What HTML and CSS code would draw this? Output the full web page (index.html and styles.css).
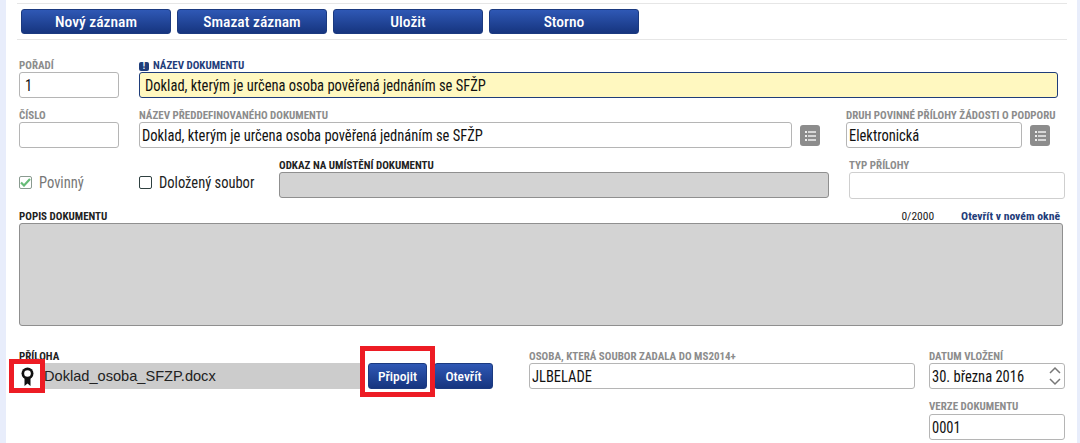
FILE: index.html
```html
<!DOCTYPE html>
<html lang="cs">
<head>
    <meta charset="UTF-8">
    <meta name="viewport" content="width=device-width, initial-scale=1.0">
    <title>Dokument</title>
    <link rel="stylesheet" href="styles.css">
</head>
<body>
    <div class="page">
        <div class="toolbar">
            <button class="btn btn-wide">Nový záznam</button>
            <button class="btn btn-wide">Smazat záznam</button>
            <button class="btn btn-wide">Uložit</button>
            <button class="btn btn-wide">Storno</button>
        </div>

        <div class="form">
            <div class="row row-first">
                <div class="field w-small">
                    <label class="lbl">POŘADÍ</label>
                    <div class="input input-pad"><span class="txt">1</span></div>
                </div>
                <div class="field w-name">
                    <label class="lbl lbl-req"><span class="req-mark">!</span>NÁZEV DOKUMENTU</label>
                    <div class="input input-req"><span class="txt">Doklad, kterým je určena osoba pověřená jednáním se SFŽP</span></div>
                </div>
            </div>

            <div class="row">
                <div class="field w-small">
                    <label class="lbl">ČÍSLO</label>
                    <div class="input"></div>
                </div>
                <div class="field w-predef">
                    <label class="lbl">NÁZEV PŘEDDEFINOVANÉHO DOKUMENTU</label>
                    <div class="input input-tight"><span class="txt">Doklad, kterým je určena osoba pověřená jednáním se SFŽP</span></div>
                </div>
                <span class="list-btn">
                    <svg width="11" height="10" viewBox="0 0 11 10"><path fill="#eee" d="M0 0h2v2H0zM3 .3h8v1.400H3zM0 4h2v2H0zM3 4.300h8v1.400H3zM0 8h2v2H0zM3 8.300h8v1.400H3z"/></svg>
                </span>
                <div class="field w-druh">
                    <label class="lbl lbl-nowrap">DRUH POVINNÉ PŘÍLOHY ŽÁDOSTI O PODPORU</label>
                    <div class="input input-tight"><span class="txt">Elektronická</span></div>
                </div>
                <span class="list-btn">
                    <svg width="11" height="10" viewBox="0 0 11 10"><path fill="#eee" d="M0 0h2v2H0zM3 .3h8v1.400H3zM0 4h2v2H0zM3 4.300h8v1.400H3zM0 8h2v2H0zM3 8.300h8v1.400H3z"/></svg>
                </span>
            </div>

            <div class="row">
                <div class="checks">
                    <span class="check check-on">
                        <span class="box box-on">
                            <svg width="11" height="9" viewBox="0 0 11 9"><path fill="none" stroke="#66bb77" stroke-width="2.200" d="M1 4.500l3 3 6-6.500"/></svg>
                        </span><span class="txt">Povinný</span>
                    </span>
                    <span class="check"><span class="box"></span><span class="txt">Doložený soubor</span></span>
                </div>
                <div class="field w-link">
                    <label class="lbl lbl-dark">ODKAZ NA UMÍSTĚNÍ DOKUMENTU</label>
                    <div class="input input-off"></div>
                </div>
                <div class="field w-typ">
                    <label class="lbl">TYP PŘÍLOHY</label>
                    <div class="input input-typ"></div>
                </div>
            </div>

            <div class="popis">
                <div class="popis-head">
                    <label class="lbl lbl-dark">POPIS DOKUMENTU</label>
                    <span class="counter">0/2000</span>
                    <a class="open-link" href="#">Otevřít v novém okně</a>
                </div>
                <div class="input input-off textarea"></div>
            </div>

            <div class="row row-attach">
                <div class="field w-file">
                    <label class="lbl lbl-dark">PŘÍLOHA</label>
                    <div class="file-name">Doklad_osoba_SFZP.docx</div>
                </div>
                <div class="attach-btns">
                    <button class="btn btn-small btn-join">Připojit</button>
                    <button class="btn btn-small">Otevřít</button>
                </div>
                <div class="field w-person">
                    <label class="lbl">OSOBA, KTERÁ SOUBOR ZADALA DO MS2014+</label>
                    <div class="input input-tight"><span class="txt">JLBELADE</span></div>
                </div>
                <div class="w-date">
                    <div class="field">
                        <label class="lbl">DATUM VLOŽENÍ</label>
                        <div class="input input-tight input-date">
                            <span class="txt">30. března 2016</span>
                            <svg class="spin" width="12" height="22" viewBox="0 0 12 22"><path fill="none" stroke="#777" stroke-width="1.500" d="M1 8l5-5 5 5M1 14l5 5 5-5"/></svg>
                        </div>
                    </div>
                    <div class="field field-verze">
                        <label class="lbl">VERZE DOKUMENTU</label>
                        <div class="input input-tight"><span class="txt">0001</span></div>
                    </div>
                </div>
            </div>
        </div>

        <!-- red annotations over the screenshot -->
        <div class="mark mark-icon">
            <svg width="13" height="19" viewBox="0 0 13 19"><path d="M3.500 9v10l3-2.500 3 2.500V9z" fill="#111"/><circle cx="6.500" cy="6.500" r="6" fill="#111"/><circle cx="6.500" cy="6.500" r="3.300" fill="#fff"/></svg>
        </div>
        <div class="mark mark-join"></div>
    </div>
</body>
</html>
```

FILE: styles.css
```css
* {
    box-sizing: border-box;
    margin: 0;
    padding: 0;
}
body {
    font-family: 'Roboto', Arial, sans-serif;
    font-stretch: 75%;
    background-color: #ffffff;
    overflow: hidden;
}
.page {
    position: relative;
    height: 443px;
    border-left: 6px solid #e8edfb;
    border-right: 3px solid #e8edfb;
    padding: 3px 10px 0 11px;
    overflow: hidden;
}
.toolbar {
    display: flex;
    gap: 6px;
    height: 37px;
    padding: 5px 0 0 4px;
    border-top: 1px solid #e6e6e6;
    border-bottom: 1px solid #e6e6e6;
}
.btn {
    height: 25px;
    border: 1px solid #1b3a80;
    border-radius: 3px;
    background: linear-gradient(#2f58b5, #16357f);
    color: #ffffff;
    font-family: inherit;
    font-stretch: inherit;
    font-size: 15.500px;
    font-weight: 500;
}
.btn-wide {
    width: 150px;
}
.btn-small {
    width: 59px;
    height: 26px;
    font-size: 13.500px;
}
.form {
    padding: 19px 0 0 2px;
}
.row {
    display: flex;
    margin-top: 11px;
}
.row-first {
    margin-top: 0;
}
.field {
    display: flex;
    flex-direction: column;
}
.lbl {
    display: block;
    height: 12px;
    margin-bottom: 1px;
    font-size: 11px;
    line-height: 13px;
    font-weight: 700;
    color: #8c8c8c;
}
.lbl-nowrap {
    white-space: nowrap;
}
.lbl-req {
    color: #1f3d7a;
}
.lbl-dark {
    color: #222222;
}
.req-mark {
    display: inline-block;
    width: 10px;
    height: 9px;
    margin-right: 4px;
    border-radius: 2px;
    background-color: #1f3d7a;
    color: #ffffff;
    font-size: 9px;
    line-height: 9px;
    text-align: center;
}
.input {
    height: 26px;
    padding: 0 5px;
    border: 1px solid #b5b5b5;
    border-radius: 3px;
    background-color: #ffffff;
    color: #111111;
    font-size: 16px;
    line-height: 25px;
    white-space: nowrap;
}
/* the source font is narrower than Roboto's condensed cut */
.txt {
    display: inline-block;
    transform: scaleX(0.907);
    transform-origin: left center;
}
.input-tight {
    padding: 0 2px;
}
.input-req {
    background-color: #fff8c0;
    border-color: #1f3d7a;
}
.input-off {
    background-color: #d3d3d3;
    border-color: #8f8f8f;
}
.input-typ {
    height: 27px;
    border-color: #cfcfcf;
}
.textarea {
    height: 103px;
}
.w-small {
    width: 100px;
    margin-right: 20px;
}
.w-name {
    width: 919px;
}
.w-predef {
    width: 653px;
}
.w-druh {
    width: 176px;
    margin-left: 26px;
}
.list-btn {
    display: flex;
    align-items: center;
    justify-content: center;
    width: 20px;
    height: 21px;
    margin: 16px 0 0 8px;
    border-radius: 3px;
    background-color: #8c8c8c;
}
.checks {
    display: flex;
    align-items: center;
    width: 260px;
    height: 20px;
    margin-top: 13px;
    font-size: 16px;
    color: #222222;
}
.check {
    display: flex;
    align-items: center;
    width: 120px;
    white-space: nowrap;
}
.check-on {
    color: #777777;
}
.box {
    display: flex;
    flex-shrink: 0;
    align-items: center;
    justify-content: center;
    width: 13px;
    height: 13px;
    margin-right: 7px;
    border: 1px solid #2f4040;
    border-radius: 2px;
}
.box-on {
    border-color: #8a9a90;
}
.w-link {
    width: 550px;
}
.w-typ {
    width: 216px;
    margin-left: 20px;
}
.popis {
    width: 1044px;
    margin-top: 11px;
}
.popis-head {
    display: flex;
    align-items: flex-start;
    height: 13px;
}
.popis-head .lbl {
    flex: 1;
}
.counter {
    margin-right: 27px;
    font-size: 11.500px;
    line-height: 12px;
    color: #222222;
}
.open-link {
    margin-right: 3px;
    font-size: 11.700px;
    line-height: 12px;
    font-weight: 700;
    color: #1f3d7a;
    text-decoration: none;
}
.row-attach {
    margin-top: 24px;
}
.w-file {
    width: 346px;
}
.file-name {
    height: 26px;
    padding-left: 25px;
    background-color: #cccccc;
    font-family: 'Liberation Sans', Arial, sans-serif;
    font-stretch: normal;
    font-size: 14.600px;
    line-height: 26px;
    color: #222222;
}
.attach-btns {
    display: flex;
    gap: 7px;
    width: 161px;
    margin: 13px 0 0 3px;
}
.w-person {
    width: 386px;
}
.w-date {
    width: 136px;
    margin-left: 14px;
}
.input-date {
    display: flex;
    align-items: center;
    justify-content: space-between;
}
.spin {
    margin-right: 1px;
}
.field-verze {
    margin-top: 11px;
}
.field-verze .lbl {
    margin-bottom: 2px;
}
.mark {
    position: absolute;
    border: 5px solid #ed1c24;
}
.mark-icon {
    left: 3px;
    top: 359px;
    width: 36px;
    height: 34px;
    display: flex;
    align-items: center;
    justify-content: center;
    background-color: #ffffff;
}
.mark-join {
    left: 354px;
    top: 346px;
    width: 75px;
    height: 51px;
}
```
